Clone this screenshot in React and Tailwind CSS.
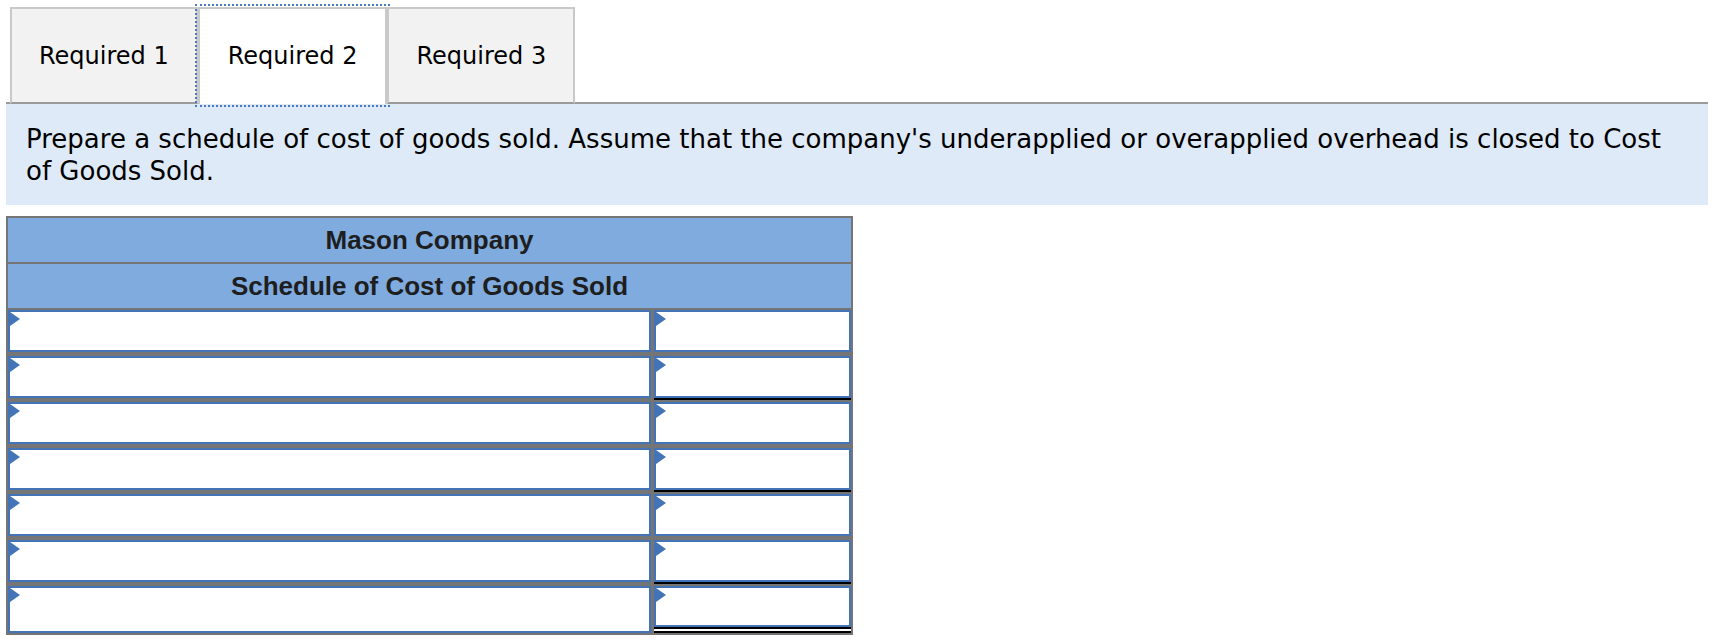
import React from 'react';

const rows = [
  { line: null },
  { line: 'single' },
  { line: null },
  { line: 'single' },
  { line: null },
  { line: 'single' },
  { line: 'double' },
];

const Cell = ({ className = '' }) => (
  <div className={`relative bg-white border-2 border-[#4374b7] ${className}`}>
    <span className="absolute left-0 top-0 w-0 h-0 border-l-[10px] border-l-[#4374b7] border-y-[7px] border-y-transparent" />
  </div>
);

export default function App() {
  const tabs = ['Required 1', 'Required 2', 'Required 3'];
  const active = 1;

  return (
    <div className="w-[1716px] h-[644px] bg-white pl-[6px] pr-[8px] pt-[7px] font-['DejaVu_Sans',Verdana,sans-serif] text-black">
      {/* tab bar */}
      <div className="flex items-end">
        <div className="w-[4px] border-b-2 border-[#9a9a9a]" />
        {tabs.map((t, i) =>
          i === active ? (
            <div
              key={t}
              className="h-[97px] px-[28px] pb-[2px] flex items-center bg-white border-2 border-b-0 border-[#c9c9c9] outline-2 outline-dotted outline-[#4a7bc2] outline-offset-[1px] text-[24px]"
            >
              {t}
            </div>
          ) : (
            <div
              key={t}
              className="h-[97px] px-[27px] flex items-center bg-[#f2f2f2] border-2 border-[#c9c9c9] border-b-[#9a9a9a] text-[24px]"
            >
              {t}
            </div>
          )
        )}
        <div className="flex-1 border-b-2 border-[#9a9a9a]" />
      </div>

      {/* instructions */}
      <div className="bg-[#deeaf7] pl-[20px] pr-[20px] pt-[19px] pb-[18px] text-[26px] leading-[32px]">
        Prepare a schedule of cost of goods sold. Assume that the company's underapplied or overapplied overhead is closed to Cost of Goods Sold.
      </div>

      {/* schedule */}
      <div className="mt-[11px] w-[847px] border-2 border-[#757575] bg-[#757575] flex flex-col gap-[2px] font-['Liberation_Sans',Arial,sans-serif]">
        <div className="h-[44px] bg-[#80abde] flex items-center justify-center font-bold text-[26px] text-[#1e1e1e]">
          Mason Company
        </div>
        <div className="h-[44px] bg-[#80abde] flex items-center justify-center font-bold text-[26px] text-[#1e1e1e]">
          Schedule of Cost of Goods Sold
        </div>
        <div className="flex flex-col">
          {rows.map((r, i) =>
            r.line === 'double' ? (
              <div key={i} className="h-[47px] flex items-start gap-[3px]">
                <Cell className="w-[643px] h-[47px]" />
                <div className="flex-1 flex flex-col">
                  <Cell className="h-[41px]" />
                  <div className="h-[2px] bg-black" />
                  <div className="h-[2px] bg-white" />
                  <div className="h-[2px] bg-black" />
                </div>
              </div>
            ) : (
              <div key={i} className="h-[46px] flex items-start gap-[3px]">
                <Cell className="w-[643px] h-[42px]" />
                <div className="flex-1 flex flex-col">
                  <Cell className="h-[42px]" />
                  {r.line === 'single' && <div className="h-[2px] bg-black" />}
                </div>
              </div>
            )
          )}
        </div>
      </div>
    </div>
  );
}
